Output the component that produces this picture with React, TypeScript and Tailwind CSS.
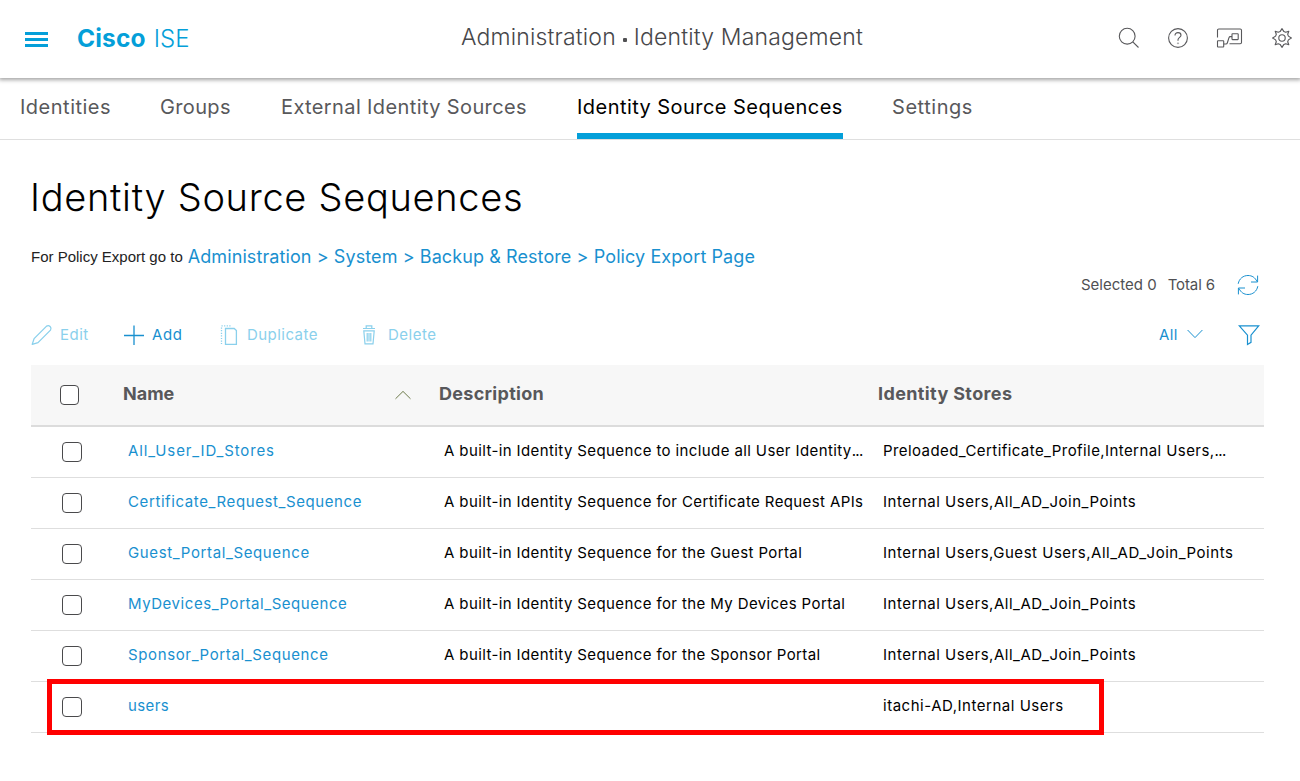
import type { ReactNode } from "react";

const tabs = [
  { label: "Identities", cls: "w-[90px] tracking-[0.5px] text-[#58585b]" },
  { label: "Groups", cls: "w-[71px] tracking-[0.35px] text-[#58585b]" },
  { label: "External Identity Sources", cls: "w-[246px] tracking-[0.38px] text-[#58585b]" },
  { label: "Identity Source Sequences", cls: "w-[266px] tracking-[0.45px] text-black", active: true },
  { label: "Settings", cls: "w-[81px] tracking-[0.55px] text-[#58585b] -ml-px" },
];

const rows = [
  {
    name: "All_User_ID_Stores",
    nameCls: "tracking-[0.87px]",
    description: "A built-in Identity Sequence to include all User Identity",
    stores: "Preloaded_Certificate_Profile,Internal Users,",
    clipped: true,
  },
  {
    name: "Certificate_Request_Sequence",
    nameCls: "tracking-[0.6px]",
    description: "A built-in Identity Sequence for Certificate Request APIs",
    stores: "Internal Users,All_AD_Join_Points",
  },
  {
    name: "Guest_Portal_Sequence",
    nameCls: "tracking-[0.63px]",
    description: "A built-in Identity Sequence for the Guest Portal",
    stores: "Internal Users,Guest Users,All_AD_Join_Points",
  },
  {
    name: "MyDevices_Portal_Sequence",
    nameCls: "tracking-[0.55px]",
    description: "A built-in Identity Sequence for the My Devices Portal",
    stores: "Internal Users,All_AD_Join_Points",
  },
  {
    name: "Sponsor_Portal_Sequence",
    nameCls: "tracking-[0.63px]",
    description: "A built-in Identity Sequence for the Sponsor Portal",
    stores: "Internal Users,All_AD_Join_Points",
  },
  { name: "users", nameCls: "tracking-[0.4px]", description: "", stores: "itachi-AD,Internal Users" },
];

function Icon({ w, h, sw = 1.1, className = "", children }: { w: number; h: number; sw?: number; className?: string; children: ReactNode }) {
  return (
    <svg
      width={w}
      height={h}
      viewBox={`0 0 ${w} ${h}`}
      fill="none"
      stroke="currentColor"
      strokeWidth={sw}
      className={`shrink-0 ${className}`}
    >
      {children}
    </svg>
  );
}

function Checkbox({ className = "" }: { className?: string }) {
  return (
    <span
      role="checkbox"
      aria-checked="false"
      className={`block h-5 shrink-0 rounded-[4px] border border-[#4a4a4c] bg-white ${className}`}
    />
  );
}

function Dots() {
  return <span className="tracking-[-0.6px]">...</span>;
}

function Header() {
  return (
    <header className="flex h-[78px] items-center pl-[25px] pr-[7px] shadow-[0_1px_4px_1px_rgba(0,0,0,0.36)] [clip-path:inset(0_0_-8px_0)]">
      <button aria-label="Menu" className="flex w-[23px] flex-col gap-[3px]">
        <span className="h-[3px] bg-[#049fd9]" />
        <span className="h-[3px] bg-[#049fd9]" />
        <span className="h-[3px] bg-[#049fd9]" />
      </button>
      <div className="-mt-0.5 ml-[29px] flex w-[384px] items-baseline text-2xl text-[#049fd9]">
        <span className="text-[24.5px] font-bold tracking-[0.15px]">Cisco</span>
        <span className="ml-2 font-light tracking-[0.1px]">ISE</span>
      </div>
      <h1 className="-mt-[3px] flex-1 whitespace-nowrap text-[23px] font-light tracking-[0.16px] text-[#47474a]">
        Administration
        <span className="mx-[7px] inline-block size-1 rounded-[1px] bg-[#505053] align-[3px]" />
        Identity Management
      </h1>
      <div className="-mt-[3px] flex items-center text-[#58585b]">
        <Icon w={22} h={22}>
          <circle cx="9.2" cy="9.2" r="7.9" />
          <path d="M14.8 14.8 20.5 20.5" />
        </Icon>
        <Icon w={22} h={22} className="ml-[27px]">
          <circle cx="11" cy="11" r="9.4" />
          <path d="M8 8.4C8 6.6 9.2 5.6 11 5.6s3 1 3 2.6c0 2-3 2.3-3 4.6v.9" />
          <circle cx="11" cy="16.3" r=".6" strokeWidth=".5" />
        </Icon>
        <Icon w={28} h={22} className="ml-[27px]">
          <path d="M1.5 10.5V3.2Q1.5 2 2.8 2H24.2Q25.5 2 25.5 3.2V15.6Q25.5 16.8 24.2 16.8H13.5" />
          <rect x="1.5" y="13.8" width="6.2" height="6.2" rx=".5" />
          <rect x="16" y="6.8" width="6.2" height="5.8" rx=".5" />
          <path d="M7.7 17H10Q11 17 11.3 16L13 10.6Q13.3 9.6 14.3 9.6H16" />
        </Icon>
        <Icon w={22} h={22} className="ml-[27px]">
          <circle cx="11" cy="11" r="3.2" />
          <path
            strokeLinejoin="round"
            d="M11 1.6 12.9 4.6 14.7 5.3 17.8 4.2 16.7 7.3 17.4 9.1 20.4 11 17.4 12.9 16.7 14.7 17.8 17.8 14.7 16.7 12.9 17.4 11 20.4 9.1 17.4 7.3 16.7 4.2 17.8 5.3 14.7 4.6 12.9 1.6 11 4.6 9.1 5.3 7.3 4.2 4.2 7.3 5.3 9.1 4.6Z"
          />
        </Icon>
      </div>
    </header>
  );
}

function Toolbar() {
  return (
    <div className="flex h-[42px] items-center text-[15px] tracking-[0.5px] text-[#8ad0ec]">
      <button className="flex w-[92px] items-center">
        <Icon w={22} h={22} sw={1.3}>
          <path d="M1.2 20.4 3.1 14.6 15.6 2.1Q17.4.9 19.1 2.4 20.8 4.2 19.5 6.1L7 18.6Z" strokeLinejoin="round" />
        </Icon>
        <span className="ml-[7px]">Edit</span>
      </button>
      <button className="flex w-[97px] items-center text-[#1990cf]">
        <Icon w={22} h={22} sw={1.3}>
          <path d="M1 11.5H21M11 1.5V21" />
        </Icon>
        <span className="ml-[7px] tracking-[0.6px]">Add</span>
      </button>
      <button className="flex w-[141px] items-center">
        <Icon w={18} h={22} sw={1.3}>
          <path d="M5.5 4.5H14.2L16.4 6.6V20.4H5.5Z" />
          <path d="M1.5 1.8H11M1.5 3.5V20" strokeDasharray="1.2 1.4" />
        </Icon>
        <span className="ml-[9px] tracking-[0.45px]">Duplicate</span>
      </button>
      <button className="flex items-center">
        <Icon w={16} h={22} sw={1.2}>
          <path d="M2 4.5H14M5.2 4.2V1.8H10.8V4.2M2.8 6.8 4 19.8H12L13.2 6.8ZM6.2 9V17.5M8 9V17.5M9.8 9V17.5" />
        </Icon>
        <span className="ml-[11px]">Delete</span>
      </button>
      <button className="ml-auto flex items-center text-[#1990cf]">
        All
        <Icon w={16} h={10} sw={1} className="ml-[9px] -mt-[3px]">
          <path d="M.6 1 8 8.6 15.4 1" />
        </Icon>
      </button>
      <button aria-label="Filter" className="ml-[35px] mr-1 text-[#1990cf]">
        <Icon w={22} h={22} sw={1.2}>
          <path d="M1.3 1.8H20.7L13 11.2V18.3L9.5 20.5V11.2Z" />
        </Icon>
      </button>
    </div>
  );
}

const columns = "grid grid-cols-[92px_316px_440px_1fr] items-center";

export default function App() {
  return (
    <div className="min-h-[781px] overflow-hidden bg-white font-['Inter','Liberation_Sans',sans-serif] text-black">
      <Header />
      <nav className="flex h-[62px] gap-[50px] border-b border-[#dfdfdf] pl-5 text-[20px]">
        {tabs.map((t) => (
          <a
            key={t.label}
            className={`box-content flex h-[55px] items-center whitespace-nowrap border-b-[6px] ${
              t.active ? "border-[#049fd9]" : "border-transparent"
            } ${t.cls}`}
          >
            <span className="pt-[3px]">{t.label}</span>
          </a>
        ))}
      </nav>
      <main className="pl-[31px] pr-9">
        <h2 className="mt-[29px] -ml-px whitespace-nowrap text-[38px] font-[330] leading-[56px] tracking-[0.7px]">
          Identity Source Sequences
        </h2>
        <p className="mt-[19px] flex h-6 items-center whitespace-nowrap text-[15px] text-[#222]">
          <span className="pt-0.5 font-['Liberation_Sans']">For Policy Export go to</span>
          <a className="ml-[5px] text-[18px] tracking-[0.09px] text-[#1990cf]">
            Administration &gt; System &gt; Backup &amp; Restore &gt; Policy Export Page
          </a>
        </p>
        <div className="mt-[5px] flex h-6 items-center justify-end text-[15px] text-[#505053]">
          <span>Selected 0</span>
          <span className="ml-[11px] tracking-[-0.1px]">Total 6</span>
          <Icon w={22} h={22} sw={1} className="ml-[22px] mr-[5px] text-[#1990cf]">
            <path d="M1.2 9.8C2.2 4.6 6.2 1.5 11 1.5c4 0 7 1.9 9 6M20.6 1.6V8H14M20.8 12.2c-1 5.2-5 8.3-9.8 8.3-4 0-7-1.9-9-6M1.4 20.4V14H8" />
          </Icon>
        </div>
        <div className="mt-[17px]">
          <Toolbar />
        </div>
        <div className={`${columns} mt-[9px] h-[62px] border-b-2 border-[#dcdcdc] bg-[#f7f7f7] text-[18px] font-bold text-[#58585b]`}>
          <Checkbox className="ml-[29px] w-[19px]" />
          <div className="-mt-[3px] flex items-center pr-[27px]">
            Name
            <Icon w={18} h={10} sw={1} className="ml-auto mt-[3px] text-[#6d7a4a]">
              <path d="M1.5 8.8 9 1.4 16.5 8.8" />
            </Icon>
          </div>
          <div className="-mt-[3px] tracking-[0.3px]">Description</div>
          <div className="-ml-px -mt-[3px] tracking-[0.37px]">Identity Stores</div>
        </div>
        <div className="relative text-[15px]">
          {rows.map((r) => (
            <div key={r.name} className={`${columns} h-[51px] whitespace-nowrap border-b border-[#dedede]`}>
              <Checkbox className="ml-[31px] w-5" />
              <a className={`-mt-0.5 pl-[5px] text-[#1990cf] ${r.nameCls}`}>{r.name}</a>
              <span className="-mt-0.5 pl-[5px] tracking-[0.39px]">
                {r.description}
                {r.clipped && <Dots />}
              </span>
              <span className={`-mt-0.5 pl-1 ${r.clipped ? "tracking-[0.42px]" : "tracking-[0.52px]"}`}>
                {r.stores}
                {r.clipped && <Dots />}
              </span>
            </div>
          ))}
          <div className="pointer-events-none absolute -bottom-0.5 left-4 h-14 w-[1057px] border-[5px] border-[#ff0000]" />
        </div>
      </main>
    </div>
  );
}
